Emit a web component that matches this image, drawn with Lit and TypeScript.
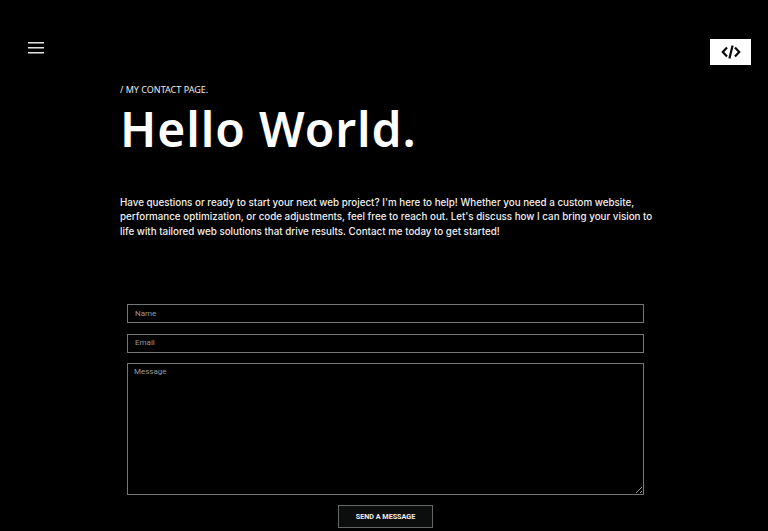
import { LitElement, html, css } from "lit";
import { customElement } from "lit/decorators.js";

@customElement("app-root")
export class AppRoot extends LitElement {
  static styles = css`
    :host { display: block; height: 531px; overflow: hidden; background: #000; color: #fff; font-family: "Open Sans", sans-serif; }
    .top { display: flex; justify-content: space-between; align-items: flex-start; padding: 39px 17px 0 28px; height: 40px; }
    .burger { display: flex; flex-direction: column; gap: 3px; width: 16px; padding-top: 3px; }
    .burger span { display: block; height: 1px; background: #e0e0e0; border-bottom: 1px solid #777; }
    .logo { width: 41px; height: 26px; background: #fff; display: flex; align-items: center; justify-content: center; }
    .logo svg { display: block; }
    main { padding: 4px 113px 0 120px; }
    .label { font-family: "Noto Sans", sans-serif; font-size: 9px; line-height: 14px; color: #eee; }
    h1 { margin: 3px 0 0; font-family: "Noto Sans", sans-serif; font-weight: 600; font-size: 48px; line-height: 58px; letter-spacing: 0.9px; }
    p { margin: 38px 0 0; font-family: Inter, sans-serif; font-weight: 500; font-size: 9.8px; line-height: 14.3px; color: #f0f0f0; }
    form { display: flex; flex-direction: column; gap: 10.5px; margin: 65.4px 0 0 7px; width: 517px; }
    input, textarea { box-sizing: border-box; width: 100%; background: #000; border: 1px solid #777; margin: 0; color: #fff; outline: none; font-family: Roboto, sans-serif; font-size: 8px; }
    input { height: 19px; padding: 0 7px 1px; }
    textarea { height: 132px; padding: 3px 6px; display: block; resize: vertical; }
    ::placeholder { color: #999; opacity: 1; }
    button { align-self: center; width: 95px; height: 23px; margin-top: -1px; background: #0c0d0d; border: 1px solid #666; color: #eee; font-family: Roboto, sans-serif; font-weight: 700; font-size: 7.2px; padding: 0; }
  `;
  render() {
    return html`
      <div class="top">
        <div class="burger"><span></span><span></span><span></span></div>
        <div class="logo">
          <svg width="20" height="16" viewBox="0 0 20 16" fill="none" stroke="#0a0a0a" stroke-width="2.2">
            <path d="M6 3.5 1.8 8 6 12.5M14 3.5 18.2 8 14 12.5M11.6 1.5 8.4 14.5"></path>
          </svg>
        </div>
      </div>
      <main>
        <div class="label">/ MY CONTACT PAGE.</div>
        <h1>Hello World.</h1>
        <p>Have questions or ready to start your next web project? I'm here to help! Whether you need a custom website, performance optimization, or code adjustments, feel free to reach out. Let's discuss how I can bring your vision to life with tailored web solutions that drive results. Contact me today to get started!</p>
        <form>
          <input placeholder="Name" />
          <input placeholder="Email" />
          <textarea placeholder="Message"></textarea>
          <button type="button">SEND A MESSAGE</button>
        </form>
      </main>
    `;
  }
}
